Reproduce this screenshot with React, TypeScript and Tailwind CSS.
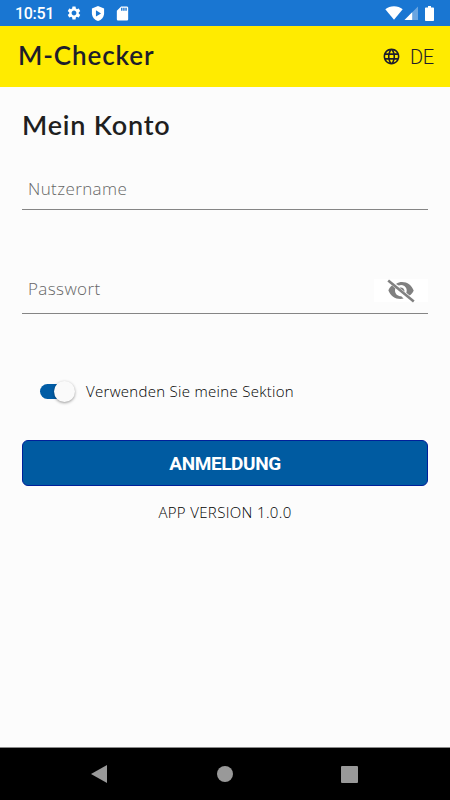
import { MdLanguage, MdSdCard, MdSettings } from "react-icons/md";

const EyeOffIcon = () => {
  return (
    <svg viewBox="0 0 28 24" className="h-6 w-7">
      <path
        fill="currentColor"
        d="M9 5C11 3.600 13 3 15 3c5.500 0 9.700 3.300 11.700 8.500-.8 2-2.200 3.700-4 5l-3.400-2.700c1-2.500.3-5.200-1.900-6.800-2.300-1.500-4.300-1.300-5.600-.4Z"
      />
      <path
        fill="currentColor"
        d="M12.500 8.800c2.500-.8 5 .9 5.200 3.900ZM5 6.500C3.300 7.900 2 9.600 1.400 11.500c2 5 6.600 8.500 12 8.500 1.200 0 2.300-.2 3.200-.5l-2.400-2.200c-3.600 0-6.200-2.400-6.200-5.800 0-.8.100-1.500.4-2.100Z"
      />
      <path
        fill="none"
        stroke="currentColor"
        strokeWidth="2.600"
        d="M1.200 1.500 26.800 22.500"
      />
    </svg>
  );
};

const StatusBar = () => {
  return (
    <div className="flex h-[26px] items-center justify-between bg-[#1976d2] pl-[15px] pr-4 text-white">
      <div className="flex items-center">
        <span className="mt-px w-[51px] font-['Roboto',sans-serif] text-base font-medium leading-none tracking-[-0.3px]">
          10:51
        </span>
        <MdSettings className="size-4" />
        <svg viewBox="0 0 14 16" className="ml-[9px] h-[15px] w-[14px]">
          <path
            fill="currentColor"
            d="M7 0 0.5 2.6V7.6C0.5 11.5 3.2 14.8 7 16c3.8-1.2 6.5-4.5 6.5-8.4V2.6Z"
          />
          <path fill="#1976d2" d="M4.8 4.6v6.6L10.2 7.9Z" />
        </svg>
        <MdSdCard className="ml-[9px] h-[17px] w-[17px]" />
      </div>
      <div className="flex items-center">
        <svg viewBox="0 0 18 14" className="h-[14px] w-[18px]">
          <path
            fill="currentColor"
            d="M0.3 3.2C2.7 1.3 5.7.3 9 .3s6.3 1 8.700 2.900L9 13.800Z"
          />
        </svg>
        <svg viewBox="0 0 14 14" className="ml-[1px] h-[14px] w-[14px]">
          <path fill="#fff" fillOpacity="0.35" d="M14 0.500V14H0.500Z" />
          <path fill="currentColor" d="M8.200 6.300V14H0.500Z" />
        </svg>
        <svg viewBox="0 0 9 15" className="ml-[7px] h-[15px] w-[9px]">
          <path
            fill="currentColor"
            d="M3 0h3v1.500h2.200q.8 0 .8.800v11.900q0 .8-.8.800H.8Q0 15 0 14.200V2.300q0-.8.8-.8H3Z"
          />
        </svg>
      </div>
    </div>
  );
};

const Header = () => {
  return (
    <header className="flex h-[61px] items-center justify-between bg-[#ffeb00] pl-[18px] pr-4 text-[#1d1d2b]">
      <h1 className="pb-[3px] font-['Lato',sans-serif] text-[26px] font-semibold leading-none tracking-[0.9px]">
        M-Checker
      </h1>
      <button className="flex items-center gap-[9px]">
        <MdLanguage className="size-[19px]" />
        <span className="font-['Roboto',sans-serif] text-[20px] font-light leading-none tracking-[-0.2px]">
          DE
        </span>
      </button>
    </header>
  );
};

const NavigationBar = () => {
  return (
    <nav className="flex h-[53px] items-center justify-between border-t border-[#8a8a8a] bg-black pl-[91px] pr-[92px] text-[#999]">
      <svg viewBox="0 0 16 18" className="h-[18px] w-4">
        <path fill="currentColor" d="M16 0v18L0 9Z" />
      </svg>
      <div className="ml-px size-4 rounded-full bg-[#999]" />
      <div className="size-[17px] rounded-[1px] bg-[#999]" />
    </nav>
  );
};

export default function App() {
  return (
    <div className="flex h-[800px] w-[450px] flex-col bg-[#fcfcfc] font-['Open_Sans',sans-serif]">
      <StatusBar />
      <Header />
      <main className="flex flex-1 flex-col px-[22px] pt-[21px]">
        <h2 className="h-[34px] font-['Lato',sans-serif] text-[27px] font-semibold leading-[34px] tracking-[0.8px] text-[#1f1f1f]">
          Mein Konto
        </h2>
        <div className="mt-[27px] h-[41px] border-b border-[#858585]">
          <input
            type="text"
            placeholder="Nutzername"
            className="h-[38px] w-full pl-[6px] text-[17px] font-light tracking-[0.4px] outline-none placeholder:text-[#666]"
          />
        </div>
        <div className="mt-[59px] flex h-[45px] items-start border-b border-[#858585]">
          <input
            type="password"
            placeholder="Passwort"
            className="h-[38px] min-w-0 flex-1 pl-[6px] text-[17px] font-light tracking-[0.4px] outline-none placeholder:text-[#666]"
          />
          <button className="mt-[10px] flex h-[23px] w-[54px] items-center justify-center bg-white text-[#808080]">
            <EyeOffIcon />
          </button>
        </div>
        <label className="mt-[63px] flex h-[28px] items-center pl-[18px]">
          <span className="flex h-[15px] w-[35px] items-center justify-end rounded-full bg-linear-to-r from-[#005ca5] from-65% to-transparent to-65%">
            <span className="size-[21px] rounded-full bg-[#fafafa] shadow-[0_1px_3px_rgba(0,0,0,0.4)]" />
          </span>
          <span className="ml-[11px] text-[15px] font-light tracking-[0.3px] text-black">
            Verwenden Sie meine Sektion
          </span>
        </label>
        <button className="mt-[35px] h-[46px] rounded-[6px] border border-[#00209a] bg-[#005ba1] pt-[2px] font-['Roboto',sans-serif] text-[19px] font-bold tracking-[-0.4px] text-white">
          ANMELDUNG
        </button>
        <p className="mt-[15px] text-center text-[15px] font-light tracking-[0.35px] text-black">
          APP VERSION 1.0.0
        </p>
      </main>
      <NavigationBar />
    </div>
  );
}
